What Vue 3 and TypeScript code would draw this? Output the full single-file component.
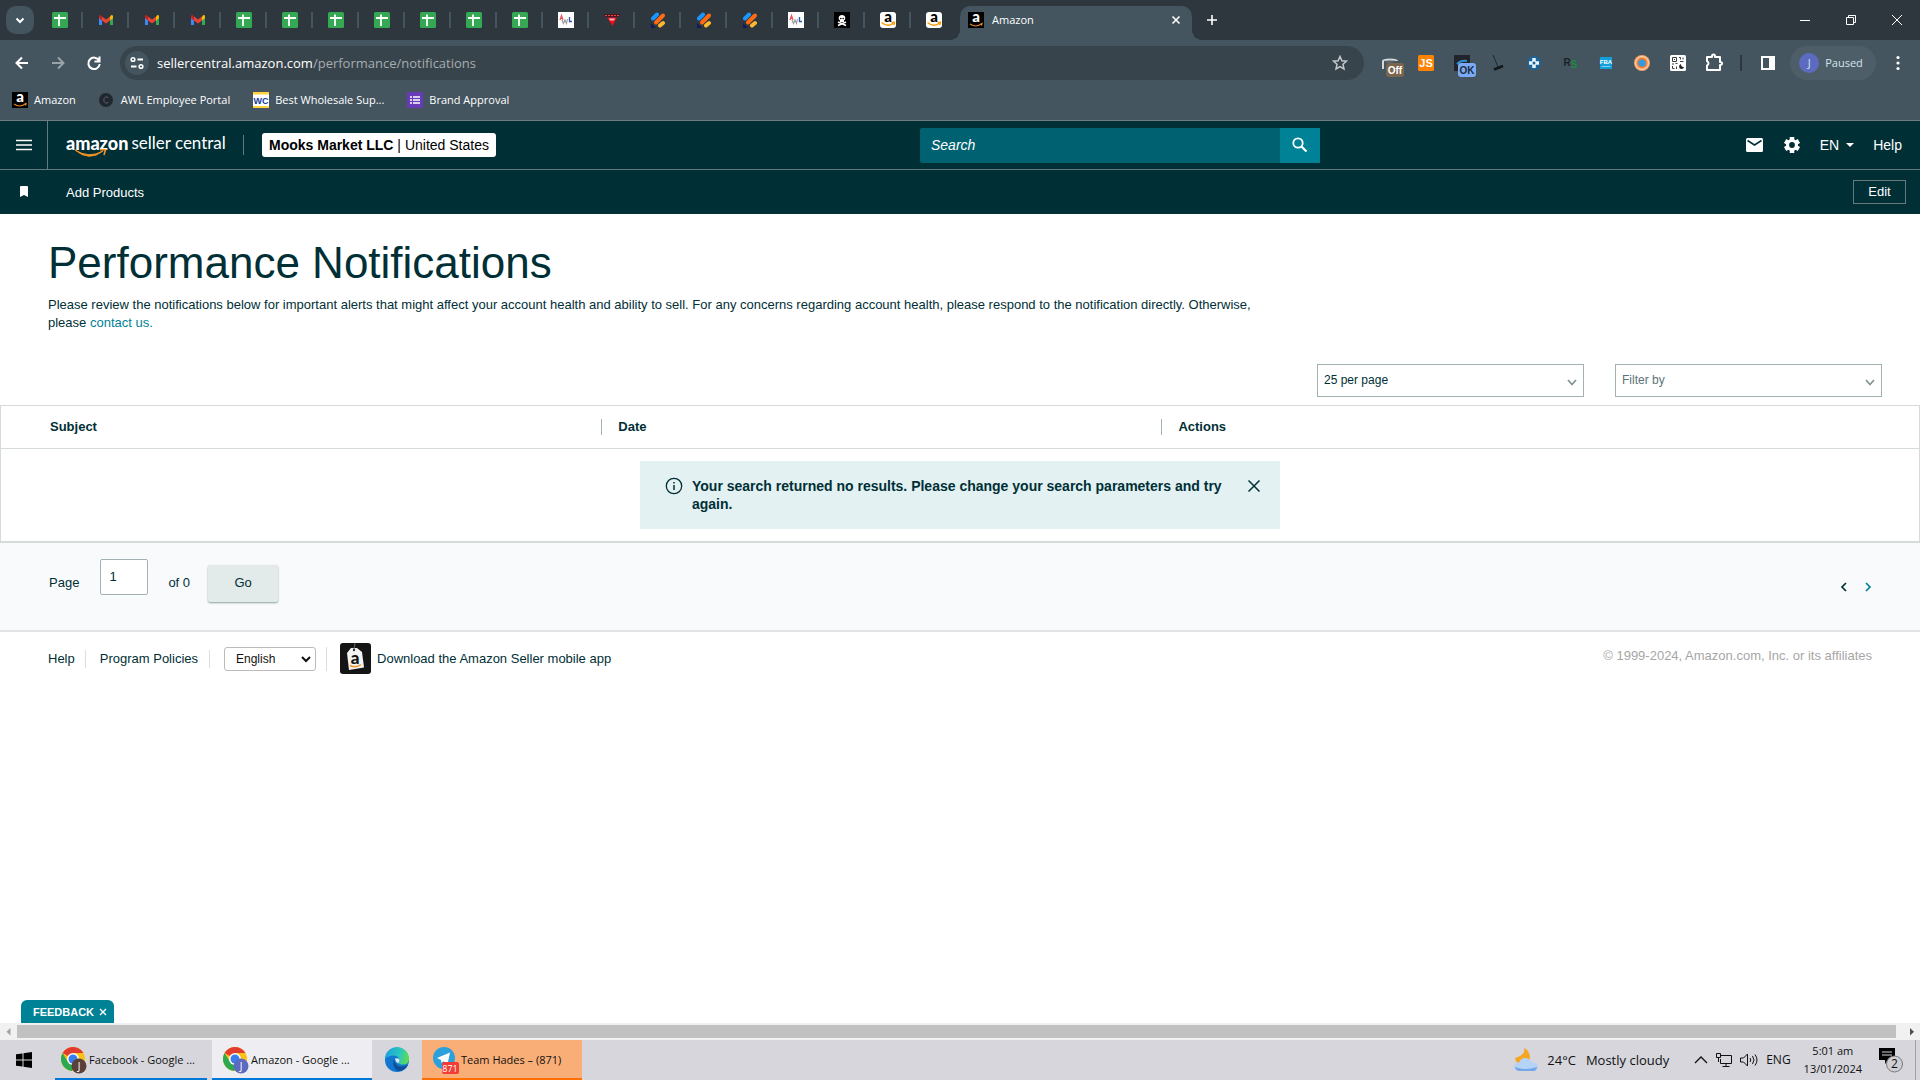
<script setup lang="ts">
import { h, ref } from 'vue'

interface Bookmark {
  icon: string
  label: string
}

interface Glyph {
  text: string
  x: number
  y: number
  size: number
  fill: string
  font?: string
}

const tabs: string[] = [
  'sheet', 'gmail', 'gmail', 'gmail',
  'sheet', 'sheet', 'sheet', 'sheet', 'sheet', 'sheet', 'sheet',
  'awl', 'wedge', 'stripes', 'stripes', 'stripes', 'awl', 'skull',
  'amazon-light', 'amazon-light',
]

const bookmarks: Bookmark[] = [
  { icon: 'amazon-dark', label: 'Amazon' },
  { icon: 'portal', label: 'AWL Employee Portal' },
  { icon: 'wc', label: 'Best Wholesale Sup...' },
  { icon: 'forms', label: 'Brand Approval' },
]

const extensions: string[] = ['helium', 'js', 'ok', 'pin', 'cross', 'rs', 'fba', 'orb', 'qr', 'puzzle']

// Letters that sit on top of an icon's shape
const glyphs: Record<string, Glyph[]> = {
  'amazon-light': [{ text: 'a', x: 8, y: 10, size: 15, fill: '#000', font: 'Lato' }],
  'amazon-dark': [{ text: 'a', x: 8, y: 10, size: 15, fill: '#fff', font: 'Lato' }],
  wc: [{ text: 'WC', x: 8, y: 12, size: 9, fill: '#123a9c' }],
  helium: [{ text: 'Off', x: 17, y: 23, size: 10, fill: '#fff' }],
  js: [{ text: 'JS', x: 12, y: 16, size: 11, fill: '#fff' }],
  ok: [{ text: 'OK', x: 17, y: 23, size: 10, fill: '#202c3a' }],
  rs: [
    { text: 'R', x: 9, y: 15, size: 10, fill: '#1b2226' },
    { text: 'S', x: 16, y: 17, size: 10, fill: '#1b8a3e' },
  ],
  fba: [{ text: 'FBA', x: 12, y: 13, size: 6, fill: '#fff' }],
}

const Icon = (props: { name: string; size: number }) =>
  h('svg', { width: props.size, height: props.size, overflow: 'visible', 'aria-hidden': 'true' }, [
    h('use', { href: '#i-' + props.name }),
    ...(glyphs[props.name] ?? []).map((g) =>
      h('text', {
        x: g.x,
        y: g.y,
        fill: g.fill,
        'text-anchor': 'middle',
        'font-family': g.font ?? 'Liberation Sans, sans-serif',
        'font-size': g.size,
        'font-weight': g.font ? 900 : 700,
      }, g.text),
    ),
  ])
Icon.props = ['name', 'size']

const perPage = ref('25 per page')
const filterBy = ref('Filter by')
const page = ref('1')
const language = ref('English')
const search = ref('')
</script>

<template>
  <div class="screen">
    <svg class="defs" aria-hidden="true">
      <symbol id="i-sheet" viewBox="0 0 16 16">
        <rect width="16" height="16" rx="1.500" fill="#34a853" />
        <path d="M2 6h12M7 2.500v11.500" stroke="#fff" stroke-width="1.800" />
      </symbol>
      <symbol id="i-gmail" viewBox="0 0 16 16">
        <path d="M1 4v9h3V6.500z" fill="#4285f4" />
        <path d="M15 4v9h-3V6.500z" fill="#34a853" />
        <path d="M12 4.500 13.500 3Q15 2.500 15 4.500V6l-3 2.500z" fill="#fbbc04" />
        <path d="M4 4.500 8 7.500l4-3v4L8 11.500l-4-3z" fill="#ea4335" />
        <path d="M1 4.500Q1 2.500 2.500 3L4 4.500v4L1 6z" fill="#c5221f" />
      </symbol>
      <symbol id="i-awl" viewBox="0 0 16 16">
        <rect width="16" height="16" fill="#fff" />
        <path d="M2 8l1.500-4.500L5 8M2.500 6.500h2" stroke="#e8545a" fill="none" stroke-width="1.200" />
        <path d="M4 8l1.500 3.500L7 8l1.500 3.500L9.500 7" stroke="#9a9a9e" fill="none" stroke-width="1.100" />
        <path d="M11.500 5v4.500H14" stroke="#2b5ba8" fill="none" stroke-width="1.300" />
      </symbol>
      <symbol id="i-wedge" viewBox="0 0 16 16">
        <path d="M0 2h16l-1.500 3h-13z" fill="#4a1626" />
        <path d="M1 3.500h14" stroke="#e6483c" stroke-dasharray="2 1" />
        <path d="M3 5.500h10L8.500 14z" fill="#e8101c" />
        <path d="M5 6.500h6l-1 2H6z" fill="#f4b8bc" />
      </symbol>
      <symbol id="i-stripes" viewBox="0 0 16 16">
        <g stroke-linecap="round" stroke-width="4">
          <path d="M3 6.500 7 2.500" stroke="#1a96ff" />
          <path d="M6 10.500 13 3.500" stroke="#ff6a13" />
          <path d="M10 13.500 13 11" stroke="#ffb92e" />
        </g>
        <path d="M1 11v5h5z" fill="#13195c" />
      </symbol>
      <symbol id="i-skull" viewBox="0 0 16 16">
        <rect width="16" height="16" fill="#000" />
        <path d="M4 10l8 3.500M12 10l-8 3.500" stroke="#fff" stroke-width="1.600" />
        <path d="M8 3c4 0 4 4.500 2 5.500V10H6V8.500C4 7.500 4 3 8 3z" fill="#fff" />
        <circle cx="6.800" cy="6.500" r=".8" /><circle cx="9.200" cy="6.500" r=".8" />
      </symbol>
      <symbol id="i-amazon-light" viewBox="0 0 16 16">
        <rect width="16" height="16" rx="3" fill="#fff" />
        <path d="M1.500 10.500q6 5 11.500 1M11.500 10.500l3-.3-.6 3" stroke="#ff9900" fill="none" stroke-width="1.400" />
      </symbol>
      <symbol id="i-amazon-dark" viewBox="0 0 16 16">
        <rect width="16" height="16" fill="#000" />
        <path d="M2 12q6 4 11 0l1-.5-.5 2" stroke="#f08c1c" fill="none" stroke-width="1.200" />
      </symbol>
      <symbol id="i-portal" viewBox="0 0 16 16">
        <circle cx="7" cy="8" r="7" fill="#20272e" />
        <path d="M9.500 5.500Q6.500 3.500 5 6.500q-1 3.500 1.500 4.500 1.500.5 3-.8" stroke="#56616a" fill="none" />
      </symbol>
      <symbol id="i-wc" viewBox="0 0 16 16">
        <rect width="16" height="16" fill="#fff" />
        <path d="M0 0h16v2.500H0zM0 14h16v2H0z" fill="#ffd040" />
      </symbol>
      <symbol id="i-forms" viewBox="0 0 16 16">
        <rect width="16" height="16" rx="1" fill="#673ab7" />
        <path d="M3 5h2M3 8h2M3 11h2M6 5h7M6 8h7M6 11h7" stroke="#fff" stroke-width="1.700" />
      </symbol>
      <symbol id="i-helium" viewBox="0 0 24 24" overflow="visible">
        <path d="M5 18V10q0-1.500 7-1.500T19 10" stroke="#d5d8da" fill="none" stroke-width="2" />
        <path d="M7 11h8" stroke="#6f777b" />
        <rect x="8" y="12" width="18" height="14" rx="3" fill="#7b664d" />
      </symbol>
      <symbol id="i-js" viewBox="0 0 24 24">
        <rect x="4" y="4" width="16" height="16" rx="1.500" fill="#ff8200" />
      </symbol>
      <symbol id="i-ok" viewBox="0 0 24 24" overflow="visible">
        <rect x="4" y="4" width="16" height="16" fill="#23232b" />
        <path d="M7 13q4-4 10-3" stroke="#2f8fd0" fill="none" stroke-width="2" />
        <rect x="8" y="12" width="18" height="14" rx="3" fill="#7baaf7" />
      </symbol>
      <symbol id="i-pin" viewBox="0 0 24 24">
        <path d="M7 4l5 12" stroke="#22292d" /><path d="M8 18.500l9-3.500" stroke="#11171a" stroke-width="2.500" />
      </symbol>
      <symbol id="i-cross" viewBox="0 0 24 24">
        <circle cx="12" cy="12" r="7" fill="#1c6497" />
        <path d="M12 7v10M7 12h10" stroke="#eaf3f8" stroke-width="3.500" /><circle cx="12" cy="12" r="1.500" fill="#1c6497" />
      </symbol>
      <symbol id="i-rs" viewBox="0 0 24 24" />
      <symbol id="i-fba" viewBox="0 0 24 24">
        <rect x="6" y="6" width="12" height="12" fill="#12a0db" />
        <path d="M7.500 15.500h9" stroke="#7fcdf0" />
      </symbol>
      <symbol id="i-orb" viewBox="0 0 24 24">
        <circle cx="12" cy="12" r="8" fill="#f4a367" /><circle cx="12" cy="12" r="6.500" fill="none" stroke="#fbd3b0" />
        <circle cx="12" cy="12" r="5" fill="#ef7835" /><circle cx="12" cy="12" r="3.500" fill="#2a9be6" />
      </symbol>
      <symbol id="i-qr" viewBox="0 0 24 24">
        <rect x="4" y="4" width="16" height="16" rx="1.500" fill="#fff" />
        <path d="M6.500 6.500h4v4h-4zM8 8.500h1M13 6.500h1.500v2M17 6.500v2M14 10.500h3.500M6 13h2M9.500 12.500h2M6.500 15v2.500h2M10.500 15.500v2.500" stroke="#3a3f43" fill="none" />
        <path d="M15 13a2.500 2.500 0 1 0 3 3 2.500 2.500 0 0 1-3-3z" fill="#222" />
      </symbol>
      <symbol id="i-puzzle" viewBox="0 0 24 24">
        <path d="M5 6h5V5a1.500 1.500 0 0 1 3 0v1h5v5h.5a1.500 1.500 0 0 1 0 3H18v5H5v-4.500q3-2 0-4.500z" stroke="#fff" fill="none" stroke-width="2" stroke-linejoin="round" />
      </symbol>
      <symbol id="i-chrome" viewBox="0 0 24 24">
        <circle cx="12" cy="12" r="12" fill="#fbc116" />
        <path d="M12 12 1.600 6A12 12 0 0 1 22.400 6H12z" fill="#e33b2e" />
        <path d="M12 12 7 15 1.600 6A12 12 0 0 0 11 24l5-9z" fill="#2da94f" />
        <circle cx="12" cy="12" r="6" fill="#fff" /><circle cx="12" cy="12" r="4.500" fill="#3b7ded" />
      </symbol>
    </svg>

    <header class="browser">
      <div class="tabstrip">
        <button class="tab-search" aria-label="Search tabs">
          <svg width="12" height="12" viewBox="0 0 12 12"><path d="M2.500 4.500 6 8l3.500-3.500" class="line" stroke-width="2" /></svg>
        </button>
        <button v-for="(icon, i) in tabs" :key="i" class="tab" :aria-label="icon"><Icon :name="icon" :size="16" /></button>
        <div class="active-tab">
          <Icon name="amazon-dark" :size="16" />
          <span>Amazon</span>
          <button aria-label="Close tab"><svg width="10" height="10" viewBox="0 0 10 10"><path d="M1.500 1.500l7 7M8.500 1.500l-7 7" class="line" stroke-width="1.600" /></svg></button>
        </div>
        <button class="new-tab" aria-label="New tab"><svg width="12" height="12" viewBox="0 0 12 12"><path d="M6 1v10M1 6h10" class="line" stroke-width="1.600" /></svg></button>
        <div class="window-controls">
          <button aria-label="Minimize"><svg width="10" height="10"><path d="M0 5.500h10" class="line" /></svg></button>
          <button aria-label="Restore"><svg width="10" height="10"><path d="M.5 2.500h7v7h-7zM2.500 2.500v-2h7v7h-2" class="line" /></svg></button>
          <button aria-label="Close"><svg width="10" height="10"><path d="M0 0l10 10M10 0 0 10" class="line" /></svg></button>
        </div>
      </div>

      <div class="toolbar">
        <nav class="nav-buttons">
          <button aria-label="Back"><svg width="16" height="16"><path d="M14 8H3M8 2.500 2.500 8 8 13.500" class="line" stroke-width="2" /></svg></button>
          <button aria-label="Forward" class="dim"><svg width="16" height="16"><path d="M2 8h11M8 2.500 13.500 8 8 13.500" class="line" stroke-width="2" /></svg></button>
          <button aria-label="Reload"><svg width="16" height="16"><path d="M13 5.500A5.700 5.700 0 1 0 13.700 9M13.500 1.500v5h-5" class="line" stroke-width="2" /></svg></button>
        </nav>
        <div class="address">
          <button class="site-info" aria-label="Site information">
            <svg width="14" height="14"><path d="M7.500 3.500H13M1 10.500h5.500" class="line" stroke-width="1.800" /><circle cx="3" cy="3.500" r="1.800" class="line" stroke-width="1.600" /><circle cx="11" cy="10.500" r="1.800" class="line" stroke-width="1.600" /></svg>
          </button>
          <span class="url">sellercentral.amazon.com<span>/performance/notifications</span></span>
          <button class="star" aria-label="Bookmark this page">
            <svg width="16" height="16"><path d="M8 1.500l1.900 4.300 4.600.4-3.500 3.100 1 4.600L8 11.500l-4 2.400 1-4.600-3.500-3.100 4.600-.4z" fill="none" stroke="#c3c9cc" stroke-width="1.500" /></svg>
          </button>
        </div>
        <div class="extensions">
          <button v-for="e in extensions" :key="e" :aria-label="e"><Icon :name="e" :size="24" /></button>
        </div>
        <i class="bar" />
        <button class="side-panel" aria-label="Side panel"><svg width="16" height="16"><path d="M2 2h12v12H2z" class="line" stroke-width="2" /><path d="M9 2h5v12H9z" fill="#fff" /></svg></button>
        <button class="profile"><span class="avatar">J</span><span>Paused</span></button>
        <button class="more" aria-label="Menu"><svg width="16" height="16" fill="#fff"><circle cx="8" cy="2.500" r="1.600" /><circle cx="8" cy="8" r="1.600" /><circle cx="8" cy="13.500" r="1.600" /></svg></button>
      </div>

      <nav class="bookmarks">
        <a v-for="b in bookmarks" :key="b.label" href="#"><Icon :name="b.icon" :size="16" />{{ b.label }}</a>
      </nav>
    </header>

    <header class="seller">
      <div class="seller-main">
        <button class="burger" aria-label="Menu"><svg width="16" height="12"><path d="M0 1.500h16M0 6h16M0 10.500h16" class="line" stroke-width="1.600" /></svg></button>
        <a class="logo" href="#">
          <b>amazon</b><span>seller central</span>
          <svg class="smile" width="34" height="9" viewBox="0 0 34 9"><path d="M1 1q14 9 28 1-14 11-28-1z" fill="#f59324" stroke="#f59324" /><path d="M26 .8 31.500.7 30 6" fill="none" stroke="#f59324" stroke-width="1.600" /></svg>
        </a>
        <i class="logo-divider" />
        <button class="account"><b>Mooks Market LLC</b> | United States</button>
        <form class="search" @submit.prevent>
          <input v-model="search" type="text" placeholder="Search" aria-label="Search" />
          <button aria-label="Search"><svg width="16" height="16"><circle cx="6" cy="6" r="4.700" class="line" stroke-width="1.800" /><path d="M9.500 9.500l5 5" class="line" stroke-width="2.200" /></svg></button>
        </form>
        <div class="seller-tools">
          <button aria-label="Messages"><svg width="18" height="14"><rect width="17" height="14" rx="1.500" fill="#fff" /><path d="M1.500 2.500l7 4.500 7-4.500" fill="none" stroke="#002f36" stroke-width="1.500" /></svg></button>
          <button aria-label="Settings"><svg width="18" height="18" viewBox="0 0 18 18"><g stroke="#fff" stroke-width="4.500"><path d="M9 1v16M2.100 5l13.800 8M15.900 5 2.100 13" /></g><circle cx="9" cy="9" r="6" fill="#fff" /><circle cx="9" cy="9" r="2.900" fill="#002f36" /></svg></button>
          <button class="lang">EN<svg width="8" height="4"><path d="M0 0h8L4 4z" fill="#fff" /></svg></button>
          <a href="#">Help</a>
        </div>
      </div>
      <div class="seller-sub">
        <svg width="48" height="12"><path d="M20 1q0-1 1-1h6q1 0 1 1v10l-4-2-4 2z" fill="#fff" /></svg>
        <a href="#">Add Products</a>
        <button>Edit</button>
      </div>
    </header>

    <main>
      <section class="intro">
        <h1>Performance Notifications</h1>
        <p>Please review the notifications below for important alerts that might affect your account health and ability to sell. For any concerns regarding account health, please respond to the notification directly. Otherwise, please <a href="#">contact us.</a></p>
      </section>
      <div class="filters">
        <label class="picker">
          <select v-model="perPage" aria-label="Results per page"><option>25 per page</option></select>
          <svg width="10" height="7"><path d="M1 1l4 4.500L9 1" /></svg>
        </label>
        <label class="picker muted">
          <select v-model="filterBy" aria-label="Filter by"><option>Filter by</option></select>
          <svg width="10" height="7"><path d="M1 1l4 4.500L9 1" /></svg>
        </label>
      </div>
      <table>
        <colgroup><col class="c-subject" /><col class="c-date" /><col /></colgroup>
        <thead><tr><th>Subject</th><th><span>Date</span></th><th><span>Actions</span></th></tr></thead>
        <tbody>
          <tr><td colspan="3">
            <div class="alert">
              <svg width="18" height="18"><circle cx="9" cy="9" r="7.700" fill="none" stroke="#002f36" stroke-width="1.300" /><path d="M9 8v5M9 5v1.500" stroke="#002f36" stroke-width="1.500" /></svg>
              <strong>Your search returned no results. Please change your search parameters and try again.</strong>
              <button aria-label="Dismiss"><svg width="12" height="12"><path d="M.5.5l11 11M11.500.5l-11 11" fill="none" stroke="#002f36" stroke-width="1.500" /></svg></button>
            </div>
          </td></tr>
        </tbody>
      </table>
      <form class="pager" @submit.prevent>
        <label for="page">Page</label>
        <input id="page" v-model="page" type="text" />
        <span>of 0</span>
        <button class="go">Go</button>
        <div class="arrows">
          <button type="button" aria-label="Previous page"><svg width="8" height="10"><path d="M6 1 2 5l4 4" fill="none" stroke="#002f36" stroke-width="1.700" /></svg></button>
          <button type="button" aria-label="Next page"><svg width="8" height="10"><path d="M2 1l4 4-4 4" fill="none" stroke="#008296" stroke-width="1.700" /></svg></button>
        </div>
      </form>
      <footer class="page-footer">
        <a href="#" class="first">Help</a>
        <a href="#" class="policies">Program Policies</a>
        <span class="lang-cell">
          <span class="lang-box">
            <select v-model="language" aria-label="Language"><option>English</option></select>
            <svg width="10" height="7"><path d="M1 1l4 4 4-4" fill="none" stroke="#111" stroke-width="2" /></svg>
          </span>
        </span>
        <a href="#" class="app">
          <svg width="31" height="31" viewBox="0 0 31 31"><rect width="31" height="31" rx="3" fill="#151515" /><path d="M11 5h6l5 4 2 15.500-15 2.500L7 10z" fill="#f4f4f4" /><path d="M15 0l-1 6" stroke="#666" /><circle cx="14" cy="7" r="1.200" fill="#333" /><text x="15" y="21" class="tag" fill="#111">a</text><path d="M10 22.500q6 3 11-1" stroke="#f7941d" fill="none" stroke-width="1.500" /></svg>
          Download the Amazon Seller mobile app
        </a>
        <small>© 1999-2024, Amazon.com, Inc. or its affiliates</small>
      </footer>
      <button class="feedback">FEEDBACK<svg width="8" height="8"><path d="M1 1l6 6M7 1 1 7" class="line" stroke-width="1.400" /></svg></button>
    </main>

    <div class="scrollbar">
      <svg width="17" height="17"><path d="M10.500 5v7.500L6.500 8.750z" fill="#a3a3a3" /></svg>
      <div class="thumb" />
      <svg width="17" height="17"><path d="M7 5v7.500l4-3.750z" fill="#505050" /></svg>
    </div>

    <footer class="taskbar">
      <button class="start" aria-label="Start"><svg width="16" height="16"><path d="M0 2.300 6.500 1.400V7.500H0zM7.500 1.300 16 0v7.500H7.500zM0 8.500h6.500v6.100L0 13.700zM7.500 8.500H16V16l-8.500-1.300z" /></svg></button>
      <button class="task facebook">
        <svg width="26" height="30"><use href="#i-chrome" y="3" width="24" height="24" /><circle cx="18" cy="22" r="7.500" fill="#5a4038" /><text x="18" y="26" class="initial">J</text></svg>
        <span>Facebook - Google ...</span>
      </button>
      <button class="task current">
        <svg width="26" height="30"><use href="#i-chrome" y="3" width="24" height="24" /><circle cx="18" cy="22" r="7.500" fill="#5c6bc0" /><text x="18" y="26" class="initial">J</text></svg>
        <span>Amazon - Google ...</span>
      </button>
      <button class="edge" aria-label="Edge">
        <svg width="26" height="26" viewBox="0 0 26 26">
          <defs><linearGradient id="edge-top" x1="0" x2="1" y1=".3" y2=".5"><stop offset="0" stop-color="#1c9fe0" /><stop offset=".6" stop-color="#2ac7bd" /><stop offset="1" stop-color="#5fdc50" /></linearGradient></defs>
          <circle cx="13" cy="13" r="12" fill="#1278cf" />
          <path d="M1 12A12 12 0 0 1 25 12q0 5.500-6 5.500-4 0-4.500-2 1.500-1.500 1-3Q14.500 9 10 8.500 4 8.500 1 12z" fill="url(#edge-top)" />
          <path d="M10 12q-3 8 4 12 7 0 10-6-4 2-8 1.500-5-1-6-7.500z" fill="#0f4f99" />
          <path d="M11 11.500q5-1 4.500 2.500-1.500 1.500-1 2.500-3-1-3.500-5z" fill="#d9e9ee" />
        </svg>
      </button>
      <button class="task team">
        <svg width="26" height="30"><circle cx="11" cy="14" r="11" fill="#2ca0da" /><path d="M4 14l13-5.500-2.500 12-4-3.200L8.500 19l-.5-3z" fill="#fff" /><rect x="9" y="18" width="17" height="12" rx="2" fill="#f23d36" /><text x="17" y="28" class="count">871</text></svg>
        <span>Team Hades – (871)</span>
      </button>
      <div class="tray">
        <svg width="26" height="26"><path d="M11 1q2 7-9 10 1 7 9 6 6-2 6-7-1-7-6-9z" fill="#f5a623" /><path d="M6 24q-5-.5-5-4.500 1-4 5-4 2-5 7-4.500 4 .5 5.500 4.500 6 0 6.500 4-.5 4-4 4.500z" fill="#b5d3f7" /><path d="M2 20q10 4 22 0-.5 4-3.500 4H6q-3.500-.5-4-4z" fill="#74a7e8" /></svg>
        <span class="temp">24°C</span><span class="temp cloudy">Mostly cloudy</span>
        <svg width="14" height="8"><path d="M1 7l6-6 6 6" fill="none" stroke="#111" stroke-width="1.300" /></svg>
        <svg width="16" height="14"><path d="M5 2.500h10.500v8H4.500V6M10 10.500v3M6.500 13.500h7M.5.500h4v4h-4zM2.500 4.500V9" fill="none" stroke="#111" /></svg>
        <svg width="18" height="14"><path d="M.5 5h3l4-4v12l-4-4h-3zM10 5q1.500 2 0 4M12.500 3q3 4 0 8M15 1.500q4 5.500 0 11" fill="none" stroke="#111" /></svg>
        <span>ENG</span>
        <span class="clock">5:01 am<br />13/01/2024</span>
        <svg width="26" height="28"><path d="M0 2h16v12H9l-3 4v-4H0z" /><path d="M3 6h10M3 9h10" stroke="#d6d6dc" /><circle cx="15.500" cy="18" r="8" fill="#cfcfd3" stroke="#77777c" /><text x="15.500" y="22" class="num">2</text></svg>
      </div>
    </footer>
  </div>
</template>

<style>
body { margin: 0; }
</style>

<style scoped>
* { box-sizing: border-box; }
.screen { display: flex; flex-direction: column; min-height: 100vh; background: #fff; color: #002f36; font: 13px/18px "Liberation Sans", Arial, sans-serif; }
.defs { position: absolute; width: 0; height: 0; }
svg { display: block; flex: none; }
button { display: flex; align-items: center; justify-content: center; margin: 0; padding: 0; border: 0; background: none; color: inherit; font: inherit; }
a { color: inherit; text-decoration: none; }
.line { fill: none; stroke: #fff; }
.tag { font: 900 17px "Lato", sans-serif; text-anchor: middle; }

.browser { background: #44555f; color: #fff; font: 12px/16px "Open Sans", sans-serif; border-bottom: 1px solid #6d7b82; }
.tabstrip { display: flex; height: 40px; padding-left: 6px; background: #2d373d; }
.tab-search { width: 28px; height: 28px; margin: 6px 3px 0 0; border-radius: 10px; background: #44555f; }
.tab { position: relative; width: 46px; height: 40px; }
.tab:not(:nth-of-type(21))::after { content: ""; position: absolute; right: 0; top: 12px; width: 2px; height: 16px; background: #44555f; }
.active-tab { position: relative; display: flex; align-items: center; gap: 8px; width: 232px; height: 34px; margin: 6px 0 0 3px; padding: 0 10px 6px 8px; border-radius: 10px 10px 0 0; background: #44555f; font-size: 11px; }
.active-tab::before, .active-tab::after { content: ""; position: absolute; bottom: 0; width: 10px; height: 10px; }
.active-tab::before { left: -10px; background: radial-gradient(circle at 0 0, transparent 10px, #44555f 10px); }
.active-tab::after { right: -10px; background: radial-gradient(circle at 100% 0, transparent 10px, #44555f 10px); }
.active-tab button { width: 12px; height: 12px; margin-left: auto; }
.new-tab { width: 28px; height: 40px; margin-left: 6px; }
.window-controls { display: flex; margin-left: auto; }
.window-controls button { width: 46px; height: 40px; }
.toolbar { display: flex; align-items: center; height: 46px; padding: 0 4px; }
.nav-buttons { display: flex; padding-right: 8px; }
.nav-buttons button { width: 36px; height: 34px; }
.dim { opacity: .45; }
.address { display: flex; align-items: center; flex: 1; height: 34px; padding: 0 12px 0 5px; border-radius: 17px; background: #38444b; font-size: 13px; }
.site-info { width: 24px; height: 24px; border-radius: 50%; background: #44555f; margin-right: 8px; }
.url span { color: #a5adb2; }
.star { width: 24px; height: 24px; margin-left: auto; }
.extensions { display: flex; padding: 0 8px; }
.extensions button { width: 36px; height: 34px; }
.bar { width: 2px; height: 16px; background: #2d373d; }
.side-panel { width: 36px; height: 34px; margin: 0 4px 0 8px; }
.profile { gap: 6px; width: 86px; height: 34px; padding-right: 4px; border-radius: 17px; background: #4d5e68; color: #d5e5f0; font-size: 11px; }
.avatar { width: 20px; height: 20px; border-radius: 50%; background: #5c6bc0; line-height: 20px; }
.more { width: 36px; height: 34px; margin-left: 4px; }
.bookmarks { display: flex; align-items: center; gap: 23px; height: 34px; padding: 0 12px 6px; font-size: 11px; }
.bookmarks a { display: flex; align-items: center; gap: 6px; }

.seller { background: #002f36; color: #fff; }
.seller-main { display: flex; align-items: center; height: 49px; border-bottom: 1px solid #66797d; font-size: 14px; }
.burger { width: 48px; height: 48px; border-right: 1px solid #66797d; }
.logo { position: relative; display: flex; gap: 3px; width: 160px; margin-left: 18px; padding-bottom: 4px; font: 17px/24px "Lato", sans-serif; white-space: nowrap; }
.logo b { font-size: 18px; font-weight: 900; }
.smile { position: absolute; left: 8px; top: 18px; }
.logo-divider { width: 1px; height: 20px; margin: 0 18px 0 17px; background: #66797d; }
.account { height: 24px; padding: 0 7px; border-radius: 3px; background: #fff; color: #000; white-space: pre; }
.search { display: flex; width: 400px; height: 35px; margin-left: auto; }
.search input { flex: 1; min-width: 0; padding: 0 11px; border: 0; border-radius: 2px 0 0 2px; background: #006170; color: #fff; font: italic 14px "Liberation Sans", sans-serif; }
.search input::placeholder { color: #fff; opacity: 1; }
.search button { width: 40px; background: #008296; }
.seller-tools { display: flex; align-items: center; justify-content: flex-end; gap: 19px; flex: 0 1 600px; padding-right: 18px; }
.lang { gap: 7px; }
.seller-sub { display: flex; align-items: center; height: 44px; padding-right: 14px; }
.seller-sub a { margin: 2px 0 0 18px; }
.seller-sub button { width: 53px; height: 24px; margin-left: auto; border: 1px solid #66797d; }

main { display: flex; flex-direction: column; flex: 1; }
.intro { padding: 20px 48px 0; }
h1 { margin: 0; font-size: 44px; line-height: 58px; font-weight: normal; }
p { max-width: 1240px; margin: 4px 0 0; }
.intro a { color: #008296; }
.filters { display: flex; justify-content: flex-end; gap: 31px; padding: 32px 38px 8px; }
.picker { position: relative; width: 267px; }
.picker select { width: 100%; height: 33px; padding: 0 6px 2px; border: 1px solid #a2b2b4; border-radius: 0; appearance: none; background: #fff; color: #002f36; font: 12px "Liberation Sans", sans-serif; }
.picker.muted select { color: #5c7377; }
.picker svg { position: absolute; right: 7px; top: 15px; fill: none; stroke: #839295; stroke-width: 1.700; }
table { width: 100%; border-collapse: separate; border-spacing: 0; table-layout: fixed; border: 1px solid #d5dbdb; border-bottom-width: 2px; }
.c-subject { width: 31.300%; }
.c-date { width: 29.200%; }
th { height: 43px; padding: 0; border-bottom: 1px solid #d5dbdb; text-align: left; }
th:first-child { padding-left: 49px; }
th span { display: block; height: 16px; padding-left: 16px; border-left: 1px solid #a2b2b4; line-height: 16px; }
td { padding: 12px 0; }
.alert { display: flex; align-items: flex-start; gap: 9px; width: 640px; height: 68px; margin: 0 auto; padding: 16px 20px 0 25px; background: #e3f1f2; font-size: 14px; }
.alert strong { flex: 1; }
.alert button { width: 12px; height: 18px; }
.pager { display: flex; align-items: center; height: 89px; padding: 0 40px 7px 49px; border-bottom: 2px solid #e1e4e7; background: #f9fafb; }
.pager input { width: 48px; height: 36px; margin: 0 20px 12px 21px; padding: 0 8px 2px; border: 1px solid #a2b2b4; border-radius: 2px; background: #fff; color: #002f36; font: 13px "Liberation Sans", sans-serif; }
.go { width: 70px; height: 37px; margin-left: 18px; border-radius: 2px; background: #e3eaea; box-shadow: 0 1px 2px #8f9fa2; }
.arrows { display: flex; margin-left: auto; padding-top: 8px; }
.arrows button { width: 24px; height: 24px; }
.page-footer { display: flex; align-items: center; padding: 11px 48px 0; }
.first { padding-right: 10px; border-right: 1px solid #dedede; }
.policies { padding: 0 11px 0 14px; border-right: 1px solid #dedede; }
.lang-cell { padding: 0 10px 0 14px; border-right: 1px solid #dedede; }
.lang-box { position: relative; display: block; }
.lang-box select { display: block; width: 92px; height: 24px; padding: 0 11px; border: 1px solid #bbb; border-radius: 3px; appearance: none; background: #fff; color: #111; font: 12px "Liberation Sans", sans-serif; }
.lang-box svg { position: absolute; right: 5px; top: 9px; }
.app { display: flex; align-items: center; gap: 6px; margin-left: 13px; }
.page-footer small { margin: 0 0 6px auto; color: #a6a6a6; font-size: 13px; }
.feedback { gap: 5px; width: 93px; height: 23px; margin: auto 0 0 21px; padding-left: 5px; border-radius: 6px 6px 0 0; background: #008296; color: #fff; font-size: 11px; font-weight: bold; }

.scrollbar { display: flex; align-items: center; height: 17px; background: #f1f1f1; }
.thumb { flex: 1; height: 13px; margin-right: 7px; background: #c1c1c1; }
.taskbar { display: flex; height: 40px; padding-right: 4px; background: #d6d6dc; color: #111; font: 12px/16px "Open Sans", sans-serif; }
.start { width: 48px; margin-right: 7px; }
.task { justify-content: flex-start; gap: 2px; width: 160px; padding-left: 11px; border-bottom: 2px solid #0078d7; font-size: 11px; white-space: nowrap; }
.task span { padding-top: 2px; }
.facebook { width: 152px; margin-right: 5px; padding-left: 6px; }
.current { background: #eeeef2; }
.edge { width: 50px; }
.team { background: #f9ae78; border-color: #ff7000; }
.initial { font: 10px "Open Sans", sans-serif; text-anchor: middle; fill: #fff; }
.count { font: 9px "Open Sans", sans-serif; text-anchor: middle; fill: #fff; }
.num { font: 12px "Open Sans", sans-serif; text-anchor: middle; fill: #111; }
.tray { display: flex; align-items: center; gap: 8px; margin-left: auto; padding-right: 10px; border-right: 1px solid #a0a0a5; }
.temp { font-size: 13px; }
.cloudy { margin: 0 17px 0 2px; }
.clock { margin: 0 9px 0 5px; text-align: center; font-size: 11px; line-height: 18px; }
</style>
